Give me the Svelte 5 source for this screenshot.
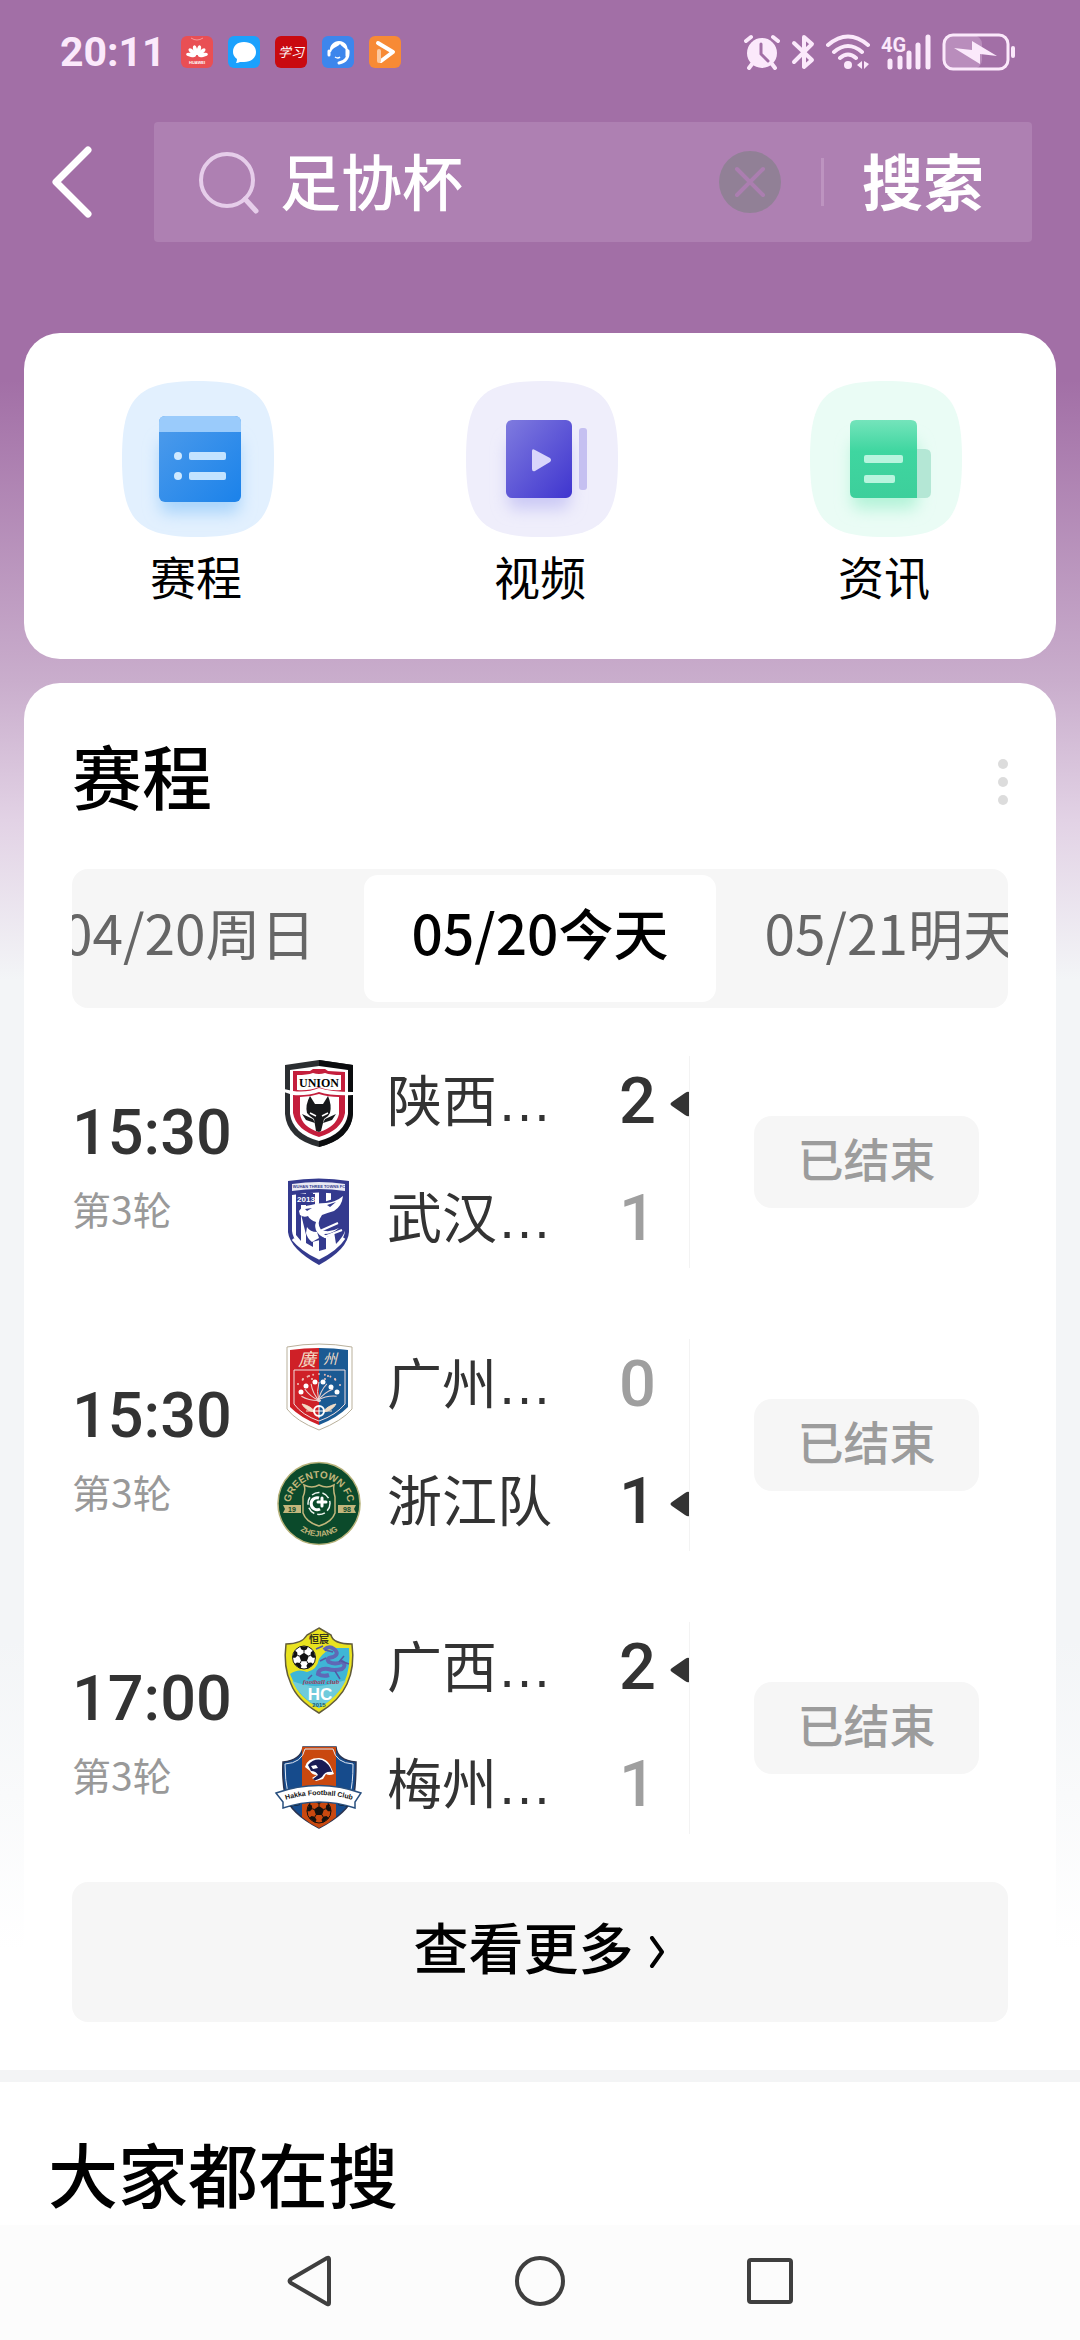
<script>
  let keyword = $state("足协杯");
  let activeTab = $state("05/20今天");

  const shortcuts = [
    { label: "赛程", icon: "schedule" },
    { label: "视频", icon: "video" },
    { label: "资讯", icon: "news" },
  ];

  const tabs = ["04/20周日", "05/20今天", "05/21明天"];

  const matches = [
    {
      time: "15:30",
      round: "第3轮",
      status: "已结束",
      teams: [
        { name: "陕西…", crest: "union", score: 2, win: true },
        { name: "武汉…", crest: "wuhan", score: 1, win: false },
      ],
    },
    {
      time: "15:30",
      round: "第3轮",
      status: "已结束",
      teams: [
        { name: "广州…", crest: "guangzhou", score: 0, win: false },
        { name: "浙江队", crest: "zhejiang", score: 1, win: true },
      ],
    },
    {
      time: "17:00",
      round: "第3轮",
      status: "已结束",
      teams: [
        { name: "广西…", crest: "guangxi", score: 2, win: true },
        { name: "梅州…", crest: "meizhou", score: 1, win: false },
      ],
    },
  ];

  const petals = [-78, -52, -26, 0, 26, 52, 78];
  const spots = [0, 72, 144, 216, 288];
</script>

{#snippet shortcutIcon(name)}
  <svg class="shortcut-icon" viewBox="0 0 156 156" aria-hidden="true">
    <defs>
      <linearGradient id="blue-sheet" x1="0" y1="0" x2="1" y2="1">
        <stop offset="0" stop-color="#4f9ceb" />
        <stop offset="1" stop-color="#1b82ea" />
      </linearGradient>
      <linearGradient id="violet-sheet" x1="0" y1="0" x2="1" y2="1">
        <stop offset="0" stop-color="#7f7bdf" />
        <stop offset="1" stop-color="#3f35cf" />
      </linearGradient>
      <linearGradient id="green-sheet" x1="0" y1="0" x2="0" y2="1">
        <stop offset="0" stop-color="#74e4bb" />
        <stop offset="0.4" stop-color="#3fd6a0" />
        <stop offset="1" stop-color="#3dcf9b" />
      </linearGradient>
      <filter id="soft" x="-30%" y="-30%" width="160%" height="160%">
        <feGaussianBlur stdDeviation="8" />
      </filter>
    </defs>
    {#if name === "schedule"}
      <path d="M4 78C4 18 18 0 80 0s76 18 76 78-14 78-76 78S4 138 4 78Z" fill="#e2f0fe" />
      <rect x="42" y="60" width="80" height="72" rx="8" fill="#a9d4fb" filter="url(#soft)" />
      <rect x="41" y="35" width="82" height="86" rx="6" fill="url(#blue-sheet)" />
      <path d="M41 51V41q0-6 6-6h70q6 0 6 6v10Z" fill="#9acbfb" />
      <circle cx="60" cy="75" r="4" fill="#cfe9ff" />
      <circle cx="60" cy="95" r="4" fill="#cfe9ff" />
      <rect x="71" y="71" width="37" height="8" rx="2" fill="#c3e3ff" />
      <rect x="71" y="91" width="37" height="8" rx="2" fill="#c3e3ff" />
    {:else if name === "video"}
      <path d="M4 78C4 18 18 0 80 0s76 18 76 78-14 78-76 78S4 138 4 78Z" fill="#efeefb" />
      <rect x="46" y="60" width="62" height="68" rx="8" fill="#cbc9f5" filter="url(#soft)" />
      <rect x="44" y="39" width="66" height="78" rx="6" fill="url(#violet-sheet)" />
      <rect x="117" y="47" width="8" height="62" rx="3" fill="#c5c0f1" />
      <path d="M70 70q0-3 3-1l15 8q2 2 0 4l-15 9q-3 1-3-2Z" fill="#d9d6fb" />
    {:else}
      <path d="M4 78C4 18 18 0 80 0s76 18 76 78-14 78-76 78S4 138 4 78Z" fill="#eafcf5" />
      <rect x="46" y="60" width="66" height="68" rx="8" fill="#b3f3d8" filter="url(#soft)" />
      <path d="M110 68h9q6 0 6 6v37q0 6-6 6h-9Z" fill="#b4e7d5" />
      <path d="M50 39h55q6 0 6 6v72H50q-6 0-6-6V45q0-6 6-6Z" fill="url(#green-sheet)" />
      <rect x="58" y="74" width="39" height="8" rx="2" fill="#b8f5de" />
      <rect x="58" y="94" width="31" height="8" rx="2" fill="#b8f5de" />
    {/if}
  </svg>
{/snippet}

{#snippet football(x, y, r, light, dark)}
  <g transform="translate({x} {y}) scale({r / 12})">
    <circle r="12" fill={light} stroke={dark} stroke-width="1" />
    <path d="M0-5l5 3.500-2 5.500h-6l-2-5.500Z" fill={dark} />
    {#each spots as a}
      <g transform="rotate({a})">
        <path d="M-4-11.500h8l-1 3-3 1.500-3-1.500Z" fill={dark} />
        <path d="M0-7v2" stroke={dark} />
      </g>
    {/each}
  </g>
{/snippet}

{#snippet crest(name)}
  <svg class="crest" viewBox="0 0 88 88" aria-hidden="true">
    {#if name === "union"}
      <path d="M45 0 79 5V54Q77 79 45 87 13 79 11 54V5Z" fill="#2b2e31" />
      <path d="M45 0 79 5V54Q77 79 45 87Z" fill="#0b0c0e" />
      <path d="M45 6 74 10V54Q71 74 45 81 19 74 16 54V10Z" fill="#fff" />
      <path d="M39 9h12l3 2 17 1V53Q68 70 45 77 22 70 19 53V11l17 0Z" fill="#c41e3c" />
      <path d="M23 15q10 0 16-2 6 2 12 0 6 2 16 2v15q-12 1-22-3-10 4-22 3Z" fill="#fff" />
      <path d="M10 29 19 31q14 2 26-3 12 4 34 4v3q-22 1-34-3-12 4-26 3l-9-3Z" fill="#fff" />
      <path d="M26 37q10 0 19-3 9 3 20 3V54q-3 13-20 18-17-5-19-18Z" fill="#fff" />
      <text x="45" y="27" text-anchor="middle" font-size="12" font-weight="700" class="serif">UNION</text>
      <path d="M36 36l5 8h8l5-8q4 9 2 17l-2 3-4 3-3 12-2 1-3-1-2-12-4-3-3-3q-2-8 3-17Z" fill="#17191b" />
      <path d="M28 54l11 5 2 4-9-3ZM62 54l-11 5-2 4 9-3Z" fill="#17191b" />
      <path d="M36 53l6 3M54 53l-6 3" stroke="#fff" stroke-width="1.500" />
    {:else if name === "wuhan"}
      <path d="M14 4Q45-1 75 4V55Q74 72 45 88 16 72 14 55Z" fill="#343a8e" />
      <path d="M18 7Q45 3 71 7v7Q45 10 18 14Z" fill="#e9e9f4" />
      <text x="45" y="11" text-anchor="middle" font-size="4" font-weight="700" fill="#343a8e">WUHAN THREE TOWNS FC</text>
      <path d="M18 18Q45 13 71 18V54Q70 68 45 81 19 68 18 54Z" fill="#fff" />
      <path d="M22 18h5v46l-5-6ZM32 16h7v54l-7-4ZM45 15h7v57l-7 2ZM57 16h14v14l-14-2Z" fill="#343a8e" />
      <path d="M22 17h19v11H22ZM58 42q9-4 13-10v22q-2 6-9 13Z" fill="#343a8e" />
      <path d="M26 33 71 18v30L50 62 34 66Z" fill="#343a8e" />
      <path d="M25 34q3-5 12-6 6-2 15-2 10-1 17-7-1 10-9 15-7 2-12 4-6 8-1 15 9 3 18-2-7 6-15 6l6 5q-9-1-13-7-3-5-1-10-6-2-8-6-4 2-8-1Z" fill="#fff" />
      <text x="32" y="25" text-anchor="middle" font-size="8" font-weight="700" fill="#fff">2013</text>
      <path d="M33 50q3 5 10 5l2 6-7 4q-5-4-6-9Z" fill="#fff" />
      <path d="M46 54l18-8M50 60l18-7" stroke="#fff" stroke-width="2" />
      <path d="M31 32l7-1-5 3ZM53 28l9-3-6 5Z" fill="#343a8e" />
      <path d="M19 62q9 11 26 19 18-9 25-20" fill="none" stroke="#fff" stroke-width="3" />
    {:else if name === "guangzhou"}
      <path d="M13 4Q29 1 45 1t33 3V66Q68 78 45 87 22 78 13 66Z" fill="#fff" stroke="#b9b09b" />
      <path d="M45 5v77Q27 75 16 64V7q14-2 29-2Z" fill="#cf2027" />
      <path d="M45 5v77q18-7 29-18V7q-14-2-29-2Z" fill="#1b5a93" />
      <text x="33" y="23" text-anchor="middle" font-size="18" font-style="italic" fill="#f3ddc6" class="brush">廣</text>
      <text x="56" y="21" text-anchor="middle" font-size="14" font-style="italic" fill="#f3ddc6" class="brush">州</text>
      <path d="M20 27h51v34q-9 11-26 17-17-6-25-17Z" fill="none" stroke="#f2dfe0" stroke-width="1" />
      {#each petals as a}
        <path d="M45 59q-3-11 0-20" transform="rotate({a} 45 57)" fill="none" stroke="#e9d2d2" stroke-width="1" />
        <circle cx="45" cy="31" r="1" transform="rotate({a / 2} 45 57)" fill="#eab9b0" />
      {/each}
      {#each [[27, 49], [32, 43], [41, 39], [49, 39], [57, 44], [63, 49]] as [x, y]}
        <circle cx={x} cy={y} r="2.500" fill="#fff" />
      {/each}
      {#each [[24, 41], [29, 36], [35, 33], [54, 33], [61, 36], [66, 42], [38, 36], [51, 36]] as [x, y]}
        <circle cx={x} cy={y} r="1" fill="#f0c9c0" />
      {/each}
      <path d="M28 61q9 2 13 8-9-1-13-8ZM62 61q-9 2-13 8 9-1 13-8ZM32 68h8M50 68h8" fill="#f3ddc6" stroke="#f3ddc6" />
      <circle cx="45" cy="68" r="5" fill="none" stroke="#fff" stroke-width="2" />
      <path d="M41 68h8M45 64v11" stroke="#fff" />
    {:else if name === "zhejiang"}
      <defs>
        <path id="arc-top" d="M16 47a29 29 0 0 1 58 0" />
        <path id="arc-bottom" d="M12 43.500a33 33 0 0 0 66 0" />
      </defs>
      <circle cx="45" cy="43.500" r="41" fill="#0b4a2b" stroke="#b7b27a" stroke-width="1.500" />
      <text font-size="10" font-weight="700" fill="#c2b67c" text-anchor="middle">
        <textPath href="#arc-top" startOffset="50%">GREENTOWN FC</textPath>
      </text>
      <text font-size="8" font-weight="700" fill="#c2b67c" text-anchor="middle">
        <textPath href="#arc-bottom" startOffset="50%">ZHEJIANG</textPath>
      </text>
      <path d="M9 45h18v8H9l2-4ZM64 45h18l-2 4 2 4H64Z" fill="#c2b67c" />
      <text x="18" y="52" text-anchor="middle" font-size="7" font-weight="700" fill="#0b4a2b">19</text>
      <text x="73" y="52" text-anchor="middle" font-size="7" font-weight="700" fill="#0b4a2b">98</text>
      <path d="M30 25q8 4 15 0 8 4 15 0-1 5 1 12v16q-3 9-16 13-13-4-16-13V37q3-7 1-12Z" fill="#0b4a2b" stroke="#c2b67c" stroke-width="1.500" />
      <circle cx="45" cy="43.500" r="11" fill="none" stroke="#eef5ef" stroke-width="1.500" stroke-dasharray="8 3" />
      <path d="M45 38a6 6 0 1 0 1 11" fill="none" stroke="#fff" stroke-width="3" />
      <path d="M48 38v8M44 42h8" stroke="#fff" stroke-width="3" stroke-linecap="round" />
    {:else if name === "guangxi"}
      <path d="M45 2l12 7q2 9 21 9 3 23-5 40Q66 74 45 87 23 74 17 58 9 41 12 18q16 0 21-9Z" fill="#e9e31f" stroke="#625c3b" stroke-width="1.500" />
      <path d="M16 48Q24 42 33 46q10-2 12-13 6-9 16-11l14 0q2 20-5 35Q63 71 45 82 25 71 20 57Z" fill="#3fb6d6" />
      <path d="M18 55q16 6 27 5t27-6Q64 71 45 82 26 71 18 55Z" fill="#6fcbdc" />
      <text x="45" y="17" text-anchor="middle" font-size="10" font-weight="700" fill="#36351c" class="brush">恒宸</text>
      {@render football(30, 31.5, 11.5, "#fff", "#111")}
      <path d="M50 24q5-5 10-1 6 5-1 8-8 1-4 5 6 3 13 0 5 3 0 7-8 2-14 0-9-1-10 5 5 3 11 1" fill="none" stroke="#5f68b6" stroke-width="4" />
      <path d="M42 23l7-3M51 24l8 2M67 35l8 3M61 45l5 8M34 53l4-4M46 35l6-3M70 30l-5 6" stroke="#5359a4" stroke-width="1.500" />
      <text x="47" y="58" text-anchor="middle" font-size="7" font-style="italic" font-weight="700" fill="#a0405c" class="serif">football club</text>
      <text x="46" y="74" text-anchor="middle" font-size="17" font-weight="700" fill="#fff">HC</text>
      <text x="45" y="81" text-anchor="middle" font-size="6" font-weight="700" fill="#175a72">2015</text>
    {:else}
      <path d="M29 4h33q1 13 20 15 0 20-2 33Q74 70 45 85 16 70 11 52 8 36 9 19 27 17 29 4Z" fill="#164b8c" stroke="#2a3350" stroke-width="1.500" />
      <path d="M28 4h34v70q-8 7-17 11-9-4-17-11Z" fill="#c9480f" />
      <path d="M31 6h28q3 14 20 15 0 20-3 30M11 21q17-1 20-15M11 21q0 16 3 30" fill="none" stroke="#dfe6f2" stroke-width="1" />
      <path d="M31 24q2-9 14-9 8 1 11 7l4 9q-5 2-8 0l-3 5-7 2-4-3 5-3q-5 0-7-4Z" fill="#fff" />
      <path d="M34 22q6-7 14-5 8 4 10 12-7-1-10 5-7 5-9 2l5-4q-2-4-7-4Z" fill="#191c55" />
      <path d="M37 23l5-1 2 3-5 1Z" fill="#fff" />
      {@render football(45, 68, 12, "#c9480f", "#14110f")}
      <path d="M12 60l14-2v4l-12 2ZM78 60l-14-2v4l12 2Z" fill="#111" />
      <path d="M2 50q43-15 85 0l-6 9 0 6q-36-12-72 0l0-6Z" fill="#fff" stroke="#29507f" stroke-width="1.500" />
      <defs><path id="ribbon" d="M8 58Q45 46 82 58" /></defs>
      <text font-size="7" font-weight="700" fill="#111" text-anchor="middle">
        <textPath href="#ribbon" startOffset="50%">Hakka Football Club</textPath>
      </text>
    {/if}
  </svg>
{/snippet}

<div class="page">
  <div class="status-bar">
    <div class="status-left">
      <span class="clock">20:11</span>
      <svg class="app-icon" viewBox="0 0 32 32" aria-hidden="true">
        <rect width="32" height="32" rx="6" fill="#e94f54" />
        <path d="M10 2q6 4 12 0" fill="none" stroke="#f59a9a" />
        <g fill="#fff">
          {#each [-80, -48, -16, 16, 48, 80] as a}
            <ellipse cx="16" cy="14" rx="2" ry="5" transform="rotate({a} 16 20)" />
          {/each}
        </g>
        <text x="16" y="28" text-anchor="middle" font-size="4" font-weight="700" fill="#fff">HUAWEI</text>
      </svg>
      <svg class="app-icon" viewBox="0 0 32 32" aria-hidden="true">
        <rect width="32" height="32" rx="6" fill="#1ba1fd" />
        <path d="M16 6c7 0 12 4 12 10s-5 10-12 10q-2 0-4 0-2 1-4 1 1-2 1-4-4-3-4-7C5 10 9 6 16 6Z" fill="#fff" />
      </svg>
      <svg class="app-icon" viewBox="0 0 32 32" aria-hidden="true">
        <rect width="32" height="32" rx="6" fill="#c90a10" />
        <text x="16" y="21" text-anchor="middle" font-size="13" font-style="italic" fill="#fff" class="brush">学习</text>
      </svg>
      <svg class="app-icon" viewBox="0 0 32 32" aria-hidden="true">
        <rect width="32" height="32" rx="6" fill="#3d86ec" />
        <path d="M8 16c-1-7 4-11 9-11 6 0 10 5 8 11-1-4-5-5-7-8-2 3-7 3-9 8Z" fill="#fff" />
        <path d="M7 19V15M26 15q1 10-9 12M25 14v6" fill="none" stroke="#fff" stroke-width="3" stroke-linecap="round" />
        <path d="M13 21q3 2 5 0" fill="none" stroke="#fff" stroke-width="1.500" />
      </svg>
      <svg class="app-icon" viewBox="0 0 32 32" aria-hidden="true">
        <rect width="32" height="32" rx="6" fill="#f78a35" />
        <path d="M9 7l15 9-12 9" fill="none" stroke="#fff" stroke-width="4" stroke-linecap="round" stroke-linejoin="round" />
        <path d="M10 15v10" stroke="#fbc9a0" stroke-width="4" stroke-linecap="round" />
      </svg>
    </div>
    <div class="status-right">
      <svg width="36" height="36" viewBox="0 0 36 36" aria-hidden="true">
        <circle cx="18" cy="19" r="15" fill="#fbe9fb" />
        <path d="M2 7l5-4M34 7l-5-4M8 30l-3 4M28 30l3 4" stroke="#fbe9fb" stroke-width="4" stroke-linecap="round" />
        <path d="M17 10v10l7 7" fill="none" stroke="#a26fa6" stroke-width="3" stroke-linecap="round" />
      </svg>
      <svg width="24" height="36" viewBox="0 0 24 36" aria-hidden="true">
        <path d="M3 9l18 17-8 7V3l8 7L3 28" fill="none" stroke="#fbe9fb" stroke-width="4" stroke-linecap="round" stroke-linejoin="round" />
      </svg>
      <svg width="44" height="36" viewBox="0 0 44 36" aria-hidden="true">
        <path d="M2 11q20-17 40 0M8 18q14-12 28 0M14 24q8-7 16 0" fill="none" stroke="#fbe9fb" stroke-width="4" stroke-linecap="round" />
        <circle cx="22" cy="31" r="4" fill="#fbe9fb" />
        <path d="M36 27v8l-5-4ZM38 27v8l5-5Z" fill="#fbe9fb" />
      </svg>
      <svg width="50" height="36" viewBox="0 0 50 36" aria-hidden="true">
        <text x="0" y="18" font-size="20" font-weight="700" fill="#fbe9fb" class="condensed">4G</text>
        <path d="M9 27v6M19 24v9M28 19v14M37 11v22M47 3v30" stroke="#fbe9fb" stroke-width="5" stroke-linecap="round" />
      </svg>
      <svg width="74" height="38" viewBox="0 0 74 38" aria-hidden="true">
        <rect x="2" y="2" width="38" height="34" rx="9" fill="#b98dbc" />
        <rect x="2" y="2" width="64" height="34" rx="9" fill="none" stroke="#fbe9fb" stroke-width="3" />
        <path d="M71 15v8" stroke="#fbe9fb" stroke-width="4" stroke-linecap="round" />
        <path d="M12 15l18 2V8l25 15-17-2v10Z" fill="#fbe9fb" />
      </svg>
    </div>
  </div>

  <header class="search-header">
    <button class="back" aria-label="返回">
      <svg width="44" height="74" viewBox="0 0 44 74" aria-hidden="true">
        <path d="M37 5 5 37l32 32" fill="none" stroke="#fff" stroke-width="7" stroke-linecap="round" stroke-linejoin="round" />
      </svg>
    </button>
    <form class="search-box" onsubmit={(event) => event.preventDefault()}>
      <svg width="62" height="64" viewBox="0 0 62 64" aria-hidden="true">
        <circle cx="29" cy="30" r="26" fill="none" stroke="#e6cdea" stroke-width="4" />
        <path d="M47 49l11 12" stroke="#e6cdea" stroke-width="5" stroke-linecap="round" />
      </svg>
      <input type="text" aria-label="搜索内容" bind:value={keyword} />
      <button type="button" class="clear" aria-label="清空" onclick={() => (keyword = "")}>
        <svg width="62" height="62" viewBox="0 0 62 62" aria-hidden="true">
          <circle cx="31" cy="31" r="31" fill="#918096" />
          <path d="M18 18l26 26M44 18 18 44" stroke="#ab7eb0" stroke-width="4" stroke-linecap="round" />
        </svg>
      </button>
      <span class="divider"></span>
      <button type="submit" class="submit">搜索</button>
    </form>
  </header>

  <nav class="card shortcuts">
    {#each shortcuts as item}
      <a class="shortcut" href="#{item.icon}">
        {@render shortcutIcon(item.icon)}
        <span>{item.label}</span>
      </a>
    {/each}
  </nav>

  <main class="card schedule">
    <div class="card-head">
      <h2>赛程</h2>
      <button class="more-menu" aria-label="更多选项">
        <svg width="10" height="46" viewBox="0 0 10 46" aria-hidden="true">
          <circle cx="5" cy="5" r="5" fill="#dcdcdc" />
          <circle cx="5" cy="23" r="5" fill="#dcdcdc" />
          <circle cx="5" cy="41" r="5" fill="#dcdcdc" />
        </svg>
      </button>
    </div>

    <div class="tabs" role="tablist">
      {#each tabs as tab}
        <button
          role="tab"
          class="tab"
          class:active={tab === activeTab}
          aria-selected={tab === activeTab}
          onclick={() => (activeTab = tab)}
        >
          {tab}
        </button>
      {/each}
    </div>

    <div class="matches">
      {#each matches as match}
        <article class="match">
          <div class="when">
            <div class="time">{match.time}</div>
            <div class="round">{match.round}</div>
          </div>
          <div class="teams">
            {#each match.teams as team}
              <div class="team" class:win={team.win}>
                {@render crest(team.crest)}
                <span class="team-name">{team.name}</span>
                <span class="score">{team.score}</span>
                <svg class="arrow" viewBox="0 0 19 26" aria-hidden="true">
                  {#if team.win}
                    <path d="M19 1v24q-1 1-4-1L2 15q-3-2 0-4L15 2q3-2 4-1Z" fill="#333" />
                  {/if}
                </svg>
              </div>
            {/each}
          </div>
          <button class="state">{match.status}</button>
        </article>
      {/each}
    </div>

    <button class="view-more">
      <span>查看更多</span>
      <svg width="18" height="32" viewBox="0 0 18 32" aria-hidden="true">
        <path d="M3 2l10 14L3 30" fill="none" stroke="#000" stroke-width="4" stroke-linecap="round" stroke-linejoin="round" />
      </svg>
    </button>
  </main>

  <section class="trending">
    <h2>大家都在搜</h2>
  </section>

  <div class="system-nav">
    <button aria-label="返回键">
      <svg width="50" height="54" viewBox="0 0 50 54" aria-hidden="true">
        <path d="M44 5v44q0 2-2 1L6 29q-3-2 0-4L42 4q2-1 2 1Z" fill="none" stroke="#3f3f3f" stroke-width="4" />
      </svg>
    </button>
    <button aria-label="主屏幕">
      <svg width="54" height="54" viewBox="0 0 54 54" aria-hidden="true">
        <circle cx="27" cy="27" r="23" fill="none" stroke="#3f3f3f" stroke-width="4" />
      </svg>
    </button>
    <button aria-label="最近任务">
      <svg width="50" height="54" viewBox="0 0 50 54" aria-hidden="true">
        <rect x="4" y="6" width="42" height="42" rx="2" fill="none" stroke="#3f3f3f" stroke-width="4" />
      </svg>
    </button>
  </div>
</div>

<style>
  :global(body) {
    background: #fff;
  }

  .page {
    font-family: "Noto Sans CJK SC", "Noto Sans", sans-serif;
    color: #000;
    overflow: hidden;
    background: linear-gradient(
      to bottom,
      #a26fa6 0,
      #a26fa6 380px,
      #c9adcc 680px,
      #e2d2e5 820px,
      #f3f5f7 980px,
      #f3f5f7 1640px,
      #fff 1950px
    );
  }

  button {
    border: 0;
    padding: 0;
    background: none;
    font: inherit;
    color: inherit;
  }

  svg {
    display: block;
    flex: none;
  }

  svg text {
    font-family: "Liberation Sans", sans-serif;
  }

  svg text.serif {
    font-family: "Liberation Serif", serif;
  }

  svg text.brush {
    font-family: "Noto Sans CJK SC", sans-serif;
  }

  svg text.condensed {
    font-family: Roboto, sans-serif;
  }

  h2 {
    margin: 0;
    font-size: 70px;
    line-height: 84px;
    font-weight: 500;
  }

  .status-bar {
    display: flex;
    justify-content: space-between;
    align-items: center;
    height: 104px;
    padding: 0 64px 0 60px;
    box-sizing: border-box;
  }

  .status-left {
    display: flex;
    align-items: center;
    gap: 15px;
  }

  .clock {
    font-family: Roboto, sans-serif;
    font-size: 41px;
    line-height: 44px;
    font-weight: 700;
    color: #fbe9fb;
  }

  .app-icon {
    width: 32px;
    height: 32px;
  }

  .status-right {
    display: flex;
    align-items: center;
    gap: 11px;
  }

  .search-header {
    display: flex;
    align-items: center;
    padding: 18px 48px 91px;
  }

  .back {
    width: 106px;
    height: 120px;
    padding-left: 3px;
  }

  .search-box {
    flex: 1;
    min-width: 0;
    height: 120px;
    display: flex;
    align-items: center;
    padding: 0 48px 0 44px;
    box-sizing: border-box;
    border-radius: 4px;
    background: #ae80b2;
  }

  .search-box input {
    flex: 1;
    min-width: 0;
    border: 0;
    outline: 0;
    padding: 0 0 4px;
    margin: 0 20px;
    background: none;
    font: inherit;
    font-size: 61px;
    line-height: 80px;
    font-weight: 500;
    height: 80px;
    color: #fff;
  }

  .divider {
    width: 3px;
    height: 48px;
    margin: 0 38px 0 40px;
    background: #bd94c0;
  }

  .submit {
    font-size: 61px;
    line-height: 80px;
    padding-bottom: 4px;
    font-weight: 700;
    color: #fff;
  }

  .card {
    margin: 0 24px;
    background: #fff;
    border-radius: 36px;
  }

  .shortcuts {
    display: flex;
    padding: 48px 0 56px;
    margin-bottom: 24px;
  }

  .shortcut {
    flex: 1;
    display: flex;
    flex-direction: column;
    align-items: center;
    gap: 10px;
    color: #000;
    text-decoration: none;
    font-size: 46px;
    line-height: 56px;
  }

  .shortcut-icon {
    width: 156px;
    height: 156px;
  }

  .schedule {
    padding: 50px 48px 48px;
    border-radius: 36px 36px 0 0;
  }

  .card-head {
    display: flex;
    justify-content: space-between;
    align-items: center;
    margin-bottom: 52px;
  }

  .more-menu {
    padding-top: 14px;
  }

  .tabs {
    display: flex;
    justify-content: center;
    padding: 6px 0;
    border-radius: 16px;
    background: #f6f6f6;
    overflow: hidden;
  }

  .tab {
    flex: none;
    padding: 0 48px 14px;
    border-radius: 14px;
    font-size: 55px;
    line-height: 113px;
    color: #666;
    white-space: nowrap;
  }

  .tab.active {
    background: #fff;
    color: #000;
    font-weight: 500;
  }

  .matches {
    display: flex;
    flex-direction: column;
    gap: 71px;
    padding: 48px 0;
  }

  .match {
    display: flex;
    align-items: center;
  }

  .when {
    width: 202px;
  }

  .time {
    font-family: Roboto, sans-serif;
    font-size: 63px;
    line-height: 80px;
    font-weight: 500;
    color: #333;
    margin-bottom: 12px;
  }

  .round {
    font-size: 39px;
    line-height: 46px;
    color: #999;
  }

  .teams {
    flex: 1;
    display: flex;
    flex-direction: column;
    gap: 22px;
    border-right: 1px solid #f3f3f3;
  }

  .team {
    display: flex;
    align-items: center;
    height: 95px;
  }

  .crest {
    width: 88px;
    height: 88px;
  }

  .team-name {
    flex: 1;
    padding: 0 0 4px 25px;
    font-family: "Liberation Sans", "Noto Sans CJK SC", sans-serif;
    font-size: 55px;
    line-height: 66px;
    color: #333;
    white-space: nowrap;
  }

  .score {
    padding-bottom: 5px;
    margin-right: 14px;
    font-family: Roboto, sans-serif;
    font-size: 65px;
    line-height: 72px;
    font-weight: 500;
    color: #9f9f9f;
  }

  .win .score {
    color: #333;
  }

  .arrow {
    width: 19px;
    height: 26px;
  }

  .state {
    width: 225px;
    margin: 0 29px 0 64px;
    padding-bottom: 10px;
    border-radius: 18px;
    background: #f6f6f6;
    font-size: 46px;
    line-height: 82px;
    font-weight: 500;
    color: #9c9c9c;
  }

  .view-more {
    width: 100%;
    height: 140px;
    display: flex;
    justify-content: center;
    align-items: center;
    gap: 15px;
    border-radius: 16px;
    background: #f6f6f6;
    font-size: 55px;
    line-height: 66px;
    font-weight: 500;
  }

  .view-more span {
    padding-bottom: 14px;
  }

  .trending {
    padding: 49px 48px 10px;
    border-top: 12px solid #f3f4f5;
    background: #fff;
  }

  .system-nav {
    display: flex;
    justify-content: center;
    align-items: center;
    gap: 178px;
    height: 115px;
    padding-bottom: 4px;
    box-sizing: border-box;
    background: #fcfcfc;
  }
</style>
